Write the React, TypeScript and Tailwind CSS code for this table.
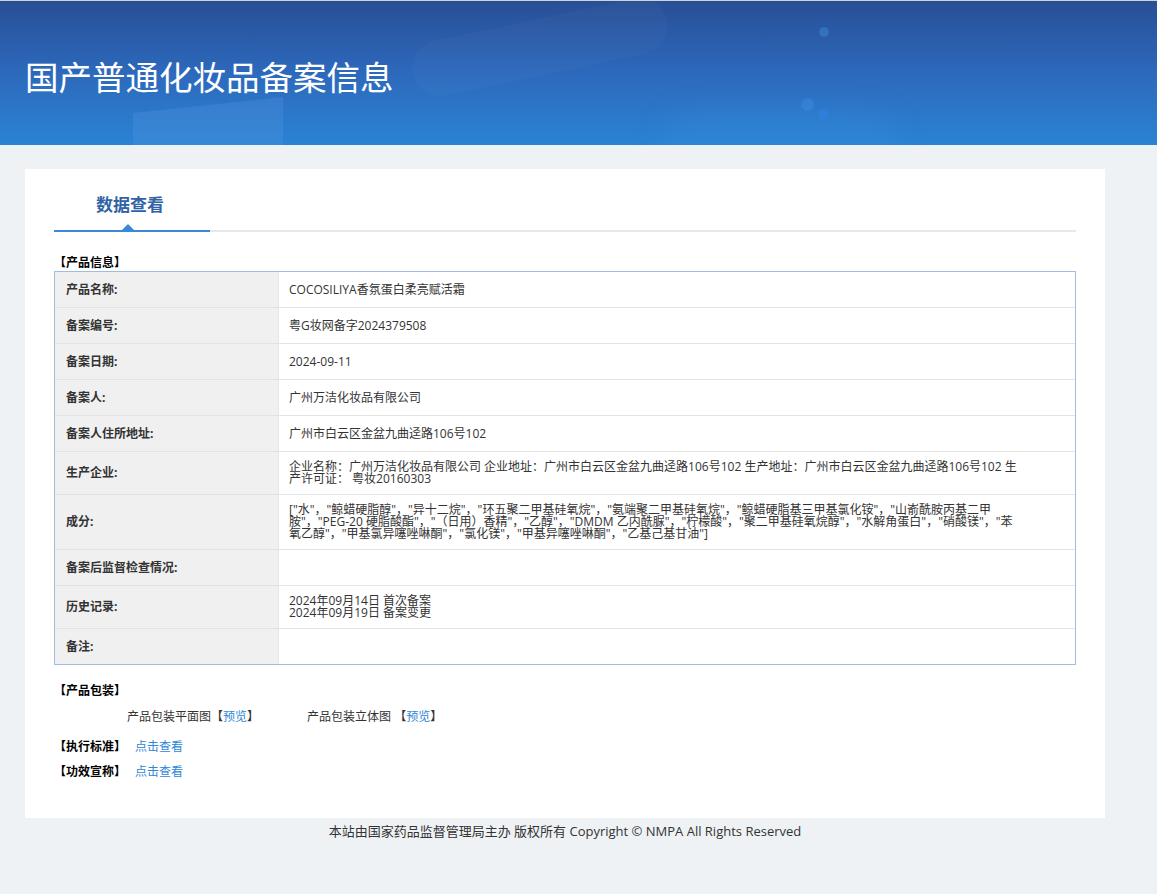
import React from "react";

type Row = { label: string; value: React.ReactNode };

const rows: Row[] = [
  { label: "产品名称:", value: "COCOSILIYA香氛蛋白柔亮赋活霜" },
  { label: "备案编号:", value: "粤G妆网备字2024379508" },
  { label: "备案日期:", value: "2024-09-11" },
  { label: "备案人:", value: "广州万洁化妆品有限公司" },
  { label: "备案人住所地址:", value: "广州市白云区金盆九曲迳路106号102" },
  {
    label: "生产企业:",
    value: (
      <>
        企业名称：广州万洁化妆品有限公司 企业地址：广州市白云区金盆九曲迳路106号102 生产地址：广州市白云区金盆九曲迳路106号102 生
        <br />
        产许可证： 粤妆20160303
      </>
    ),
  },
  {
    label: "成分:",
    value: (
      <>
        ["水"，"鲸蜡硬脂醇"，"异十二烷"，"环五聚二甲基硅氧烷"，"氨端聚二甲基硅氧烷"，"鲸蜡硬脂基三甲基氯化铵"，"山嵛酰胺丙基二甲
        <br />
        胺"，"PEG-20 硬脂酸酯"，"（日用）香精"，"乙醇"，"DMDM 乙内酰脲"，"柠檬酸"，"聚二甲基硅氧烷醇"，"水解角蛋白"，"硝酸镁"，"苯
        <br />
        氧乙醇"，"甲基氯异噻唑啉酮"，"氯化镁"，"甲基异噻唑啉酮"，"乙基己基甘油"]
      </>
    ),
  },
  { label: "备案后监督检查情况:", value: "" },
  {
    label: "历史记录:",
    value: (
      <>
        2024年09月14日 首次备案
        <br />
        2024年09月19日 备案变更
      </>
    ),
  },
  { label: "备注:", value: "" },
];

export default function App() {
  return (
    <div className="min-h-screen bg-[#eff2f5] font-['Open_Sans','Noto_Sans_CJK_SC',sans-serif] text-[12px] text-[#333]">
      {/* Banner */}
      <header className="relative h-[145px] overflow-hidden border-t border-[#cfd3d8] bg-linear-to-b from-[#274f96] via-[#2d69bc] to-[#2a83d3]">
        <div className="absolute left-[133px] top-[104px] h-[60px] w-[150px] -skew-y-6 bg-[#5b9ae6]/25" />
        <div className="absolute left-[410px] top-[18px] h-[56px] w-[260px] -rotate-12 rounded-full bg-white/[0.025]" />
        <div className="absolute left-[660px] top-[108px] h-[70px] w-[240px] rounded-full bg-[#3a92e0]/20 blur-md" />
        <div className="absolute left-[819px] top-[26px] h-[10px] w-[10px] rounded-full bg-[#3a7fd0]/60" />
        <div className="absolute left-[801px] top-[97px] h-[13px] w-[13px] rounded-full bg-[#3a8ae0]/50" />
        <div className="absolute left-[818px] top-[108px] h-[10px] w-[10px] rounded-full bg-[#2f80e0]/70" />
        <h1 className="relative pl-[25px] pt-[56px] text-[33.5px] leading-[40px] text-white">国产普通化妆品备案信息</h1>
      </header>

      <main className="ml-[25px] w-[1080px] pt-[24px]">
        <div className="bg-white px-[29px] pb-[38px] pt-[24px]">
          {/* Tab */}
          <div className="flex h-[39px] items-start border-b-2 border-[#e6e8eb]">
            <div className="relative h-[39px] w-[156px] shrink-0 border-b-2 border-[#3a89d8] pl-[42px] text-[17px] font-bold leading-[24px] text-[#2f63a6]">
              数据查看
              <span className="absolute bottom-0 left-[68px] h-0 w-0 border-x-[6px] border-b-[6px] border-x-transparent border-b-[#3a89d8]" />
            </div>
          </div>

          <div className="mt-[23px] font-bold leading-[16px] text-black">【产品信息】</div>

          <div className="border border-[#9dbde6]">
            {rows.map((row, i) => (
              <div
                key={row.label}
                className={`flex ${i < rows.length - 1 ? "min-h-[36px] border-b border-[#e3e3e3]" : "min-h-[35px]"}`}
              >
                <div className="flex w-[224px] shrink-0 items-center border-r border-[#e6e6e6] bg-[#f0f0f0] pl-[11px] font-bold">
                  {row.label}
                </div>
                <div className="flex flex-1 items-center py-[9px] pl-[10px] pr-[20px] leading-[12px]">
                  <div>{row.value}</div>
                </div>
              </div>
            ))}
          </div>

          <div className="mt-[18px] font-bold leading-[16px] text-black">【产品包装】</div>
          <div className="mt-[10px] flex gap-[48px] pl-[73px] leading-[16px]">
            <span>
              产品包装平面图【<a className="text-[#2f86d8]">预览</a>】
            </span>
            <span>
              产品包装立体图 【<a className="text-[#2f86d8]">预览</a>】
            </span>
          </div>
          <div className="mt-[14px] flex items-center gap-[9px] leading-[16px]">
            <span className="font-bold text-black">【执行标准】</span>
            <a className="text-[#2f86d8]">点击查看</a>
          </div>
          <div className="mt-[9px] flex items-center gap-[9px] leading-[16px]">
            <span className="font-bold text-black">【功效宣称】</span>
            <a className="text-[#2f86d8]">点击查看</a>
          </div>
        </div>

        <footer className="pb-[40px] pt-[5px] text-center text-[13px] leading-[16px]">
          本站由国家药品监督管理局主办 版权所有 Copyright © NMPA All Rights Reserved
        </footer>
      </main>
    </div>
  );
}
